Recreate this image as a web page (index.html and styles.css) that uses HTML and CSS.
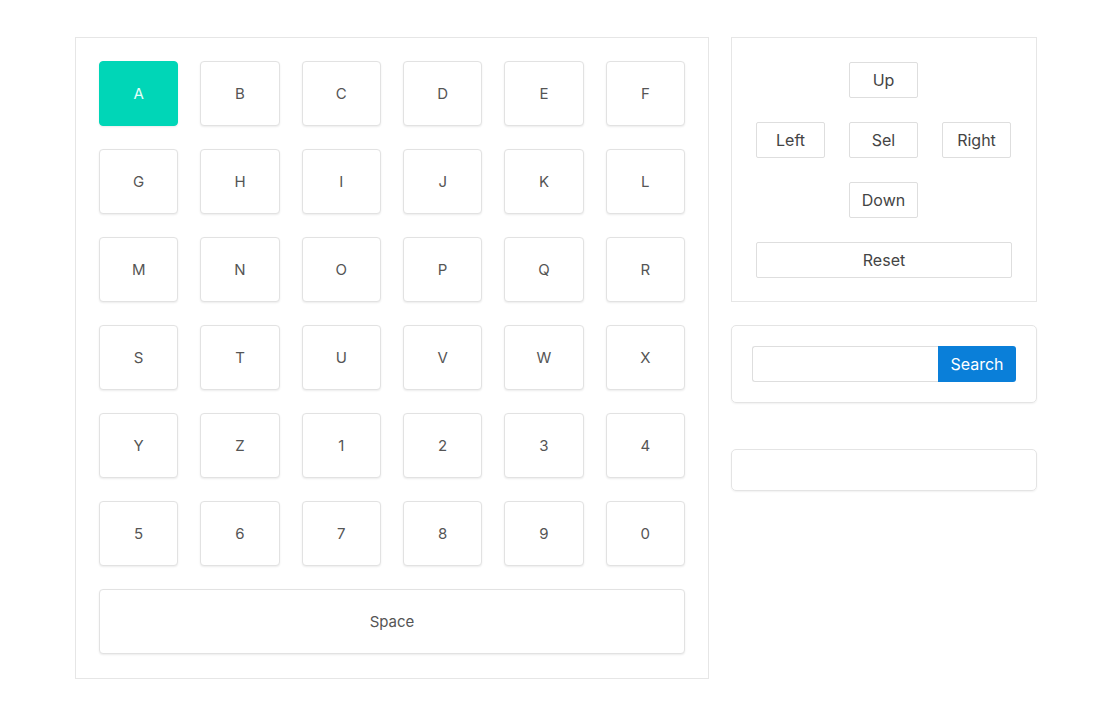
FILE: index.html
```html
<!DOCTYPE html>
<html>
<head>
<meta charset="utf-8">
<link rel="stylesheet" href="styles.css">
</head>
<body>
<div class="app">
  <div class="keyboard">
    <div class="key active">A</div><div class="key">B</div><div class="key">C</div><div class="key">D</div><div class="key">E</div><div class="key">F</div>
    <div class="key">G</div><div class="key">H</div><div class="key">I</div><div class="key">J</div><div class="key">K</div><div class="key">L</div>
    <div class="key">M</div><div class="key">N</div><div class="key">O</div><div class="key">P</div><div class="key">Q</div><div class="key">R</div>
    <div class="key">S</div><div class="key">T</div><div class="key">U</div><div class="key">V</div><div class="key">W</div><div class="key">X</div>
    <div class="key">Y</div><div class="key">Z</div><div class="key">1</div><div class="key">2</div><div class="key">3</div><div class="key">4</div>
    <div class="key">5</div><div class="key">6</div><div class="key">7</div><div class="key">8</div><div class="key">9</div><div class="key">0</div>
    <div class="key space">Space</div>
  </div>
  <div class="side">
    <div class="dpad">
      <span></span><button class="btn">Up</button><span></span>
      <button class="btn">Left</button><button class="btn">Sel</button><button class="btn">Right</button>
      <span></span><button class="btn">Down</button><span></span>
      <button class="btn reset">Reset</button>
    </div>
    <div class="card search">
      <input class="search-input" type="text">
      <button class="search-btn">Search</button>
    </div>
    <div class="card output"></div>
  </div>
</div>
</body>
</html>
```
FILE: styles.css
```css
* { box-sizing: border-box; }
html, body { margin: 0; background: #fff; }
body { font-family: Inter, "Open Sans", "Liberation Sans", sans-serif; color: #555; }
.app {
  display: flex;
  align-items: flex-start;
  gap: 22px;
  padding: 37px 0 0 75px;
}
.keyboard {
  width: 634px;
  border: 1px solid #e6e6e6;
  padding: 23px 23px 24px 23px;
  display: grid;
  grid-template-columns: repeat(6, 1fr);
  grid-auto-rows: 65px;
  column-gap: 22px;
  row-gap: 23px;
}
.key {
  border: 1px solid #e2e2e2;
  border-radius: 4px;
  box-shadow: 0 1px 2px rgba(0,0,0,0.08);
  display: flex;
  align-items: center;
  justify-content: center;
  font-size: 15px;
  color: #555;
  background: #fff;
}
.key.active {
  background: #00d6b7;
  border-color: #00d6b7;
  color: #e6fffa;
}
.key.space { grid-column: 1 / -1; }
.side {
  width: 306px;
  display: flex;
  flex-direction: column;
}
.dpad {
  border: 1px solid #e6e6e6;
  padding: 24px 24px 23px 24px;
  display: grid;
  grid-template-columns: repeat(3, 69px);
  grid-auto-rows: 36px;
  column-gap: 24px;
  row-gap: 24px;
}
.btn {
  font-family: inherit;
  font-size: 16px;
  color: #444;
  background: #fff;
  border: 1px solid #dedede;
  border-radius: 2px;
  padding: 0;
}
.btn.reset { grid-column: 1 / -1; width: 256px; }
.card {
  border: 1px solid #e4e4e4;
  border-radius: 5px;
  box-shadow: 0 1px 2px rgba(0,0,0,0.06);
  padding: 20px;
}
.search {
  margin-top: 23px;
  display: flex;
}
.search-input {
  width: 186px;
  height: 36px;
  border: 1px solid #dedede;
  border-right: none;
  border-radius: 3px 0 0 3px;
  margin: 0;
  padding: 0 8px;
}
.search-btn {
  flex: 1;
  height: 36px;
  background: #0a7fd9;
  color: #fff;
  border: none;
  border-radius: 0 3px 3px 0;
  font-family: inherit;
  font-size: 16px;
  padding: 0;
}
.output {
  margin-top: 46px;
  height: 42px;
}
```
